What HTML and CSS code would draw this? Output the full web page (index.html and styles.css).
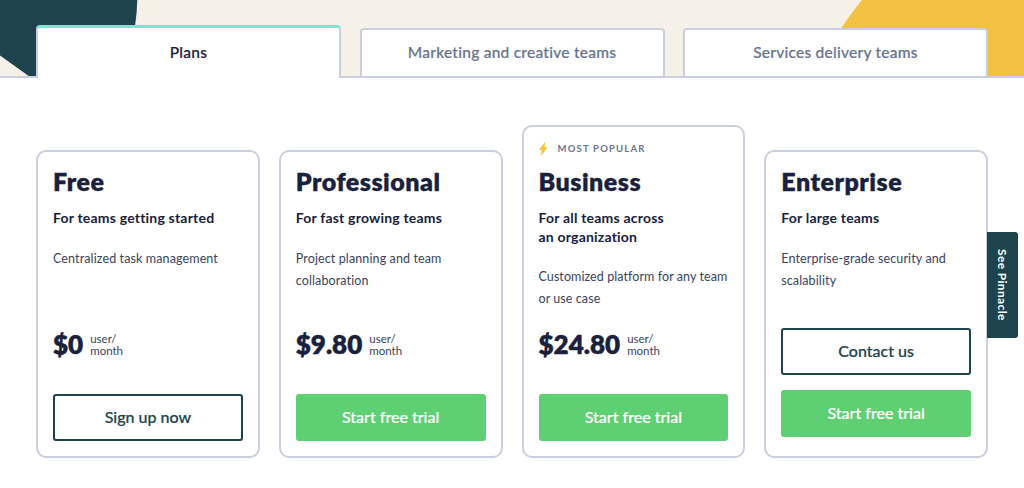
FILE: index.html
```html
<!DOCTYPE html>
<html lang="en">
<head>
    <meta charset="UTF-8">
    <meta name="viewport" content="width=device-width, initial-scale=1.0">
    <title>Plans</title>
    <link rel="stylesheet" href="styles.css">
</head>
<body>
    <header class="hero">
        <svg class="hero-shapes" width="1024" height="78" viewBox="0 0 1024 78">
            <path fill="#1d434c" d="M0 0H137.3Q137 13 135 26L120 78H31.5L0 55.5Z"></path>
            <path fill="#f4c242" d="M862 0Q851 13 842 27L820 78H1024V0Z"></path>
        </svg>
        <nav class="tabs">
            <a href="#" class="tab tab-active">Plans</a>
            <a href="#" class="tab">Marketing and creative teams</a>
            <a href="#" class="tab">Services delivery teams</a>
        </nav>
    </header>

    <main class="plans">
        <section class="plan">
            <h2>Free</h2>
            <h3>For teams getting started</h3>
            <p class="description">Centralized task management</p>
            <div class="price">
                <span class="amount">$0</span>
                <span class="unit">user/<br>month</span>
            </div>
            <a href="#" class="button button-outline">Sign up now</a>
        </section>

        <section class="plan">
            <h2>Professional</h2>
            <h3>For fast growing teams</h3>
            <p class="description">Project planning and team collaboration</p>
            <div class="price">
                <span class="amount">$9.80</span>
                <span class="unit">user/<br>month</span>
            </div>
            <a href="#" class="button">Start free trial</a>
        </section>

        <section class="plan plan-popular">
            <div class="badge">
                <svg width="9" height="14" viewBox="0 0 9 14">
                    <path fill="#f4c242" stroke="#f4c242" stroke-width="0.5" d="M5.8 0.4 0.3 7.8H3.1L2 13.5 8.3 5.5H5.5Z"></path>
                </svg>
                <span>MOST POPULAR</span>
            </div>
            <h2>Business</h2>
            <h3>For all teams across<br>an organization</h3>
            <p class="description">Customized platform for any team or use case</p>
            <div class="price">
                <span class="amount">$24.80</span>
                <span class="unit">user/<br>month</span>
            </div>
            <a href="#" class="button">Start free trial</a>
        </section>

        <section class="plan plan-enterprise">
            <h2>Enterprise</h2>
            <h3>For large teams</h3>
            <p class="description">Enterprise-grade security and scalability</p>
            <div class="actions">
                <a href="#" class="button button-outline">Contact us</a>
                <a href="#" class="button">Start free trial</a>
            </div>
        </section>
    </main>

    <a href="#" class="side-tab">See Pinnacle</a>
</body>
</html>
```
FILE: styles.css
```css
* {
    box-sizing: border-box;
}
body {
    margin: 0;
    height: 488px;
    overflow: hidden;
    background: #fff;
    color: #1a213d;
    font-family: Lato, "Liberation Sans", sans-serif;
    font-variant-ligatures: none;
}
a {
    text-decoration: none;
}
.hero {
    position: relative;
    height: 78px;
    padding: 0 36px;
    background-color: #f5f1e9;
}
.hero-shapes {
    position: absolute;
    top: 0;
    left: 0;
}
.hero::after {
    content: "";
    position: absolute;
    left: 0;
    right: 0;
    bottom: 0;
    height: 2px;
    background-color: #cacfdc;
}
.tabs {
    position: relative;
    z-index: 1;
    height: 78px;
    display: flex;
    align-items: flex-end;
    gap: 18.5px;
}
.tab {
    flex: 1;
    height: 50px;
    padding-bottom: 2px;
    display: flex;
    align-items: center;
    justify-content: center;
    background-color: #fff;
    border: 2px solid #cacfdf;
    border-radius: 4px 4px 0 0;
    color: #69758f;
    font-size: 15.5px;
    font-weight: 500;
    letter-spacing: 0.25px;
    -webkit-text-stroke: 0.2px;
}
.tab-active {
    height: 53px;
    padding-bottom: 3px;
    border-top: 3px solid #7fe3d1;
    border-bottom: none;
    color: #1a213d;
}
.plans {
    display: grid;
    grid-template-columns: repeat(4, 1fr);
    gap: 19px;
    align-items: end;
    height: 380px;
    padding: 0 36px;
}
.plan {
    display: flex;
    flex-direction: column;
    height: 308px;
    padding: 13px 15px 15px;
    border: 2px solid #cacfdf;
    border-radius: 10px;
}
.plan-popular {
    height: 333px;
}
.plan-enterprise {
    padding-bottom: 19px;
}
.badge {
    display: flex;
    align-items: center;
    gap: 10px;
    height: 18px;
    margin-bottom: 7px;
    color: #69758f;
    font-size: 9.5px;
    font-weight: 700;
    letter-spacing: 1.2px;
}
.badge span {
    padding-bottom: 1px;
}
.plan h2 {
    margin: 0;
    font-size: 25px;
    line-height: 32px;
    font-weight: 800;
    letter-spacing: 0.5px;
    -webkit-text-stroke: 0.3px;
}
.plan h3 {
    margin: 11px 0 0;
    font-size: 14px;
    line-height: 19px;
    font-weight: 700;
    letter-spacing: 0.2px;
}
.description {
    margin: 21px 0 0;
    color: #3a4360;
    font-size: 12.5px;
    line-height: 22px;
    letter-spacing: 0.12px;
}
.plan-popular .description {
    margin-top: 20px;
    letter-spacing: 0.08px;
}
.price {
    display: flex;
    align-items: center;
    gap: 7px;
    height: 30px;
    margin-top: auto;
    margin-bottom: 35px;
}
.amount {
    padding-bottom: 1px;
    font-size: 26px;
    font-weight: 800;
    -webkit-text-stroke: 0.4px;
}
.unit {
    padding-top: 2px;
    color: #3a4360;
    font-size: 11.5px;
    line-height: 12.5px;
}
.button {
    display: flex;
    flex-shrink: 0;
    align-items: center;
    justify-content: center;
    height: 47px;
    padding-bottom: 3px;
    border-radius: 3px;
    background-color: #5fcf73;
    color: #fff;
    font-size: 16px;
    font-weight: 500;
    -webkit-text-stroke: 0.2px;
}
.button-outline {
    border: 2px solid #1d434c;
    background-color: #fff;
    color: #1d434c;
}
.actions {
    display: flex;
    flex-direction: column;
    gap: 15px;
    margin-top: auto;
}
.side-tab {
    position: fixed;
    top: 232px;
    right: 6px;
    width: 31px;
    height: 106px;
    display: flex;
    align-items: center;
    justify-content: center;
    border-radius: 0 3px 3px 0;
    background-color: #1d434c;
    color: #fff;
    font-size: 12px;
    font-weight: 700;
    letter-spacing: 0.35px;
    writing-mode: vertical-rl;
}
```
